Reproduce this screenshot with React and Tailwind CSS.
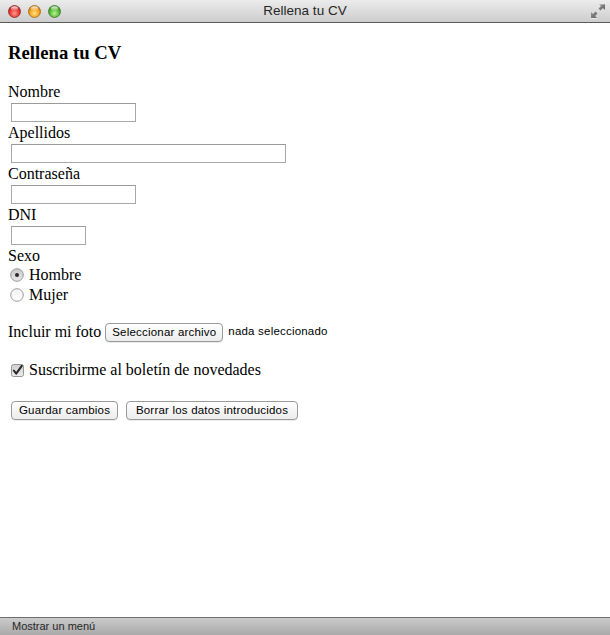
import React from "react";

function Light({ id, c1, c2, c3, border }) {
  return (
    <svg width="13" height="13" viewBox="0 0 13 13">
      <defs>
        <radialGradient id={id} cx="50%" cy="65%" r="60%">
          <stop offset="0%" stopColor={c1} />
          <stop offset="60%" stopColor={c2} />
          <stop offset="100%" stopColor={c3} />
        </radialGradient>
        <linearGradient id={id + "h"} x1="0" y1="0" x2="0" y2="1">
          <stop offset="0%" stopColor="#ffffff" stopOpacity="0.9" />
          <stop offset="100%" stopColor="#ffffff" stopOpacity="0" />
        </linearGradient>
      </defs>
      <circle cx="6.5" cy="6.5" r="6" fill={`url(#${id})`} stroke={border} strokeWidth="0.8" />
      <ellipse cx="6.5" cy="3.6" rx="3.6" ry="2.3" fill={`url(#${id}h)`} />
    </svg>
  );
}

function ResizeIcon() {
  return (
    <svg width="16" height="16" viewBox="0 0 16 16">
      <defs>
        <linearGradient id="rz" x1="0" y1="0" x2="1" y2="1">
          <stop offset="0%" stopColor="#9a9a9a" />
          <stop offset="100%" stopColor="#5c5c5c" />
        </linearGradient>
      </defs>
      <path d="M9 1 L15 1 L15 7 L13 5 L10.5 7.5 L8.5 5.5 L11 3 Z" fill="url(#rz)" />
      <path d="M7 15 L1 15 L1 9 L3 11 L5.5 8.5 L7.5 10.5 L5 13 Z" fill="url(#rz)" />
      <path d="M1 15.5 L7 15.5" stroke="#f2f2f2" strokeWidth="0.8" />
      <path d="M9 1.5 L14.5 1.5" stroke="#d8d8d8" strokeWidth="0.5" />
    </svg>
  );
}

function Radio({ checked }) {
  return (
    <svg width="14" height="14" viewBox="0 0 14 14" className="shrink-0">
      <defs>
        <linearGradient id={checked ? "rg1" : "rg2"} x1="0" y1="0" x2="0" y2="1">
          <stop offset="0%" stopColor={checked ? "#c9c9c9" : "#f2f2f2"} />
          <stop offset="100%" stopColor={checked ? "#e9e9e9" : "#ffffff"} />
        </linearGradient>
      </defs>
      <circle cx="7" cy="7" r="6.3" fill={`url(#${checked ? "rg1" : "rg2"})`} stroke="#8e8e8e" strokeWidth="0.9" />
      {checked && <circle cx="7" cy="7" r="2" fill="#2a2a2a" />}
    </svg>
  );
}

function Check() {
  return (
    <svg width="13" height="13" viewBox="0 0 13 13" className="shrink-0">
      <defs>
        <linearGradient id="cb" x1="0" y1="0" x2="0" y2="1">
          <stop offset="0%" stopColor="#cfcfcf" />
          <stop offset="100%" stopColor="#ececec" />
        </linearGradient>
      </defs>
      <rect x="0.5" y="0.5" width="12" height="12" rx="2" fill="url(#cb)" stroke="#8a8a8a" strokeWidth="0.9" />
      <path d="M2.8 6.5 L5.2 9.6 L10.8 1.8" fill="none" stroke="#262626" strokeWidth="2" strokeLinecap="round" strokeLinejoin="round" />
    </svg>
  );
}

function Btn({ children, w }) {
  return (
    <button
      className={`${w} h-[19px] rounded-[4px] border border-[#9a9a9a] bg-gradient-to-b from-[#ffffff] to-[#ececec] text-[11.5px] tracking-[0.2px] leading-[17px] text-black font-['Liberation_Sans',sans-serif] shadow-[0_1px_0_rgba(0,0,0,0.08)] flex items-center justify-center whitespace-nowrap`}
    >
      {children}
    </button>
  );
}

const serif = "font-['Liberation_Serif',serif]";

export default function App() {
  return (
    <div className="w-[610px] h-[635px] flex flex-col bg-white overflow-hidden">
      {/* title bar */}
      <div className="relative h-[23px] shrink-0 bg-gradient-to-b from-[#ececec] to-[#cdcdcd] border-b border-[#5a5a5a] flex items-center">
        <div className="flex items-center gap-[7px] pl-[8px]">
          <Light id="lr" c1="#ff9a8f" c2="#e8403a" c3="#b01c18" border="#8e2a26" />
          <Light id="lo" c1="#ffe08a" c2="#f5a623" c3="#c57a10" border="#9a6a1c" />
          <Light id="lg" c1="#b8f29a" c2="#5fbd3b" c3="#2f8a1b" border="#3f7a2a" />
        </div>
        <div className="absolute inset-0 flex items-center justify-center text-[13.5px] text-[#262626] font-['Liberation_Sans',sans-serif]">
          Rellena tu CV
        </div>
        <div className="absolute right-[4px] top-[3px]">
          <ResizeIcon />
        </div>
      </div>

      {/* content */}
      <div className={`flex-1 pl-[8px] ${serif} text-[16px] text-black`}>
        <div className="mt-[19px] mb-[19px] h-[22px] leading-[22px] text-[18.72px] font-bold">Rellena tu CV</div>

        <div className="h-[18px] leading-[18px]">Nombre</div>
        <div className="h-[23px] py-[2px] pl-[3px]">
          <div className="w-[125px] h-[19px] border border-[#a8a8a8] border-t-[#9a9a9a]" />
        </div>
        <div className="h-[18px] leading-[18px]">Apellidos</div>
        <div className="h-[23px] py-[2px] pl-[3px]">
          <div className="w-[275px] h-[19px] border border-[#a8a8a8] border-t-[#9a9a9a]" />
        </div>
        <div className="h-[18px] leading-[18px]">Contraseña</div>
        <div className="h-[23px] py-[2px] pl-[3px]">
          <div className="w-[125px] h-[19px] border border-[#a8a8a8] border-t-[#9a9a9a]" />
        </div>
        <div className="h-[18px] leading-[18px]">DNI</div>
        <div className="h-[23px] py-[2px] pl-[3px]">
          <div className="w-[75px] h-[19px] border border-[#a8a8a8] border-t-[#9a9a9a]" />
        </div>
        <div className="h-[18px] leading-[18px]">Sexo</div>
        <div className="h-[20px] flex items-center pl-[2px] gap-[5px]">
          <Radio checked />
          <span className="leading-[18px]">Hombre</span>
        </div>
        <div className="h-[20px] flex items-center pl-[2px] gap-[5px]">
          <Radio />
          <span className="leading-[18px]">Mujer</span>
        </div>

        <div className="mt-[16px] h-[22px] flex items-center">
          <span className="leading-[18px]">Incluir mi foto</span>
          <div className="ml-[4px]">
            <Btn w="w-[118px]">Seleccionar archivo</Btn>
          </div>
          <span className="ml-[5px] text-[11.5px] tracking-[0.2px] font-['Liberation_Sans',sans-serif]">nada seleccionado</span>
        </div>

        <div className="mt-[17px] h-[20px] flex items-center pl-[3px] gap-[5px]">
          <Check />
          <span className="leading-[18px]">Suscribirme al boletín de novedades</span>
        </div>

        <div className="mt-[20px] h-[20px] flex items-center pl-[3px] gap-[8px]">
          <Btn w="w-[107px]">Guardar cambios</Btn>
          <Btn w="w-[172px]">Borrar los datos introducidos</Btn>
        </div>
      </div>

      {/* status bar */}
      <div className="h-[18px] shrink-0 border-t border-[#6e6e6e] bg-gradient-to-b from-[#cbcbcb] to-[#a9a9a9] flex items-center pl-[12px] text-[11px] text-[#262626] font-['Liberation_Sans',sans-serif]">
        Mostrar un menú
      </div>
    </div>
  );
}
